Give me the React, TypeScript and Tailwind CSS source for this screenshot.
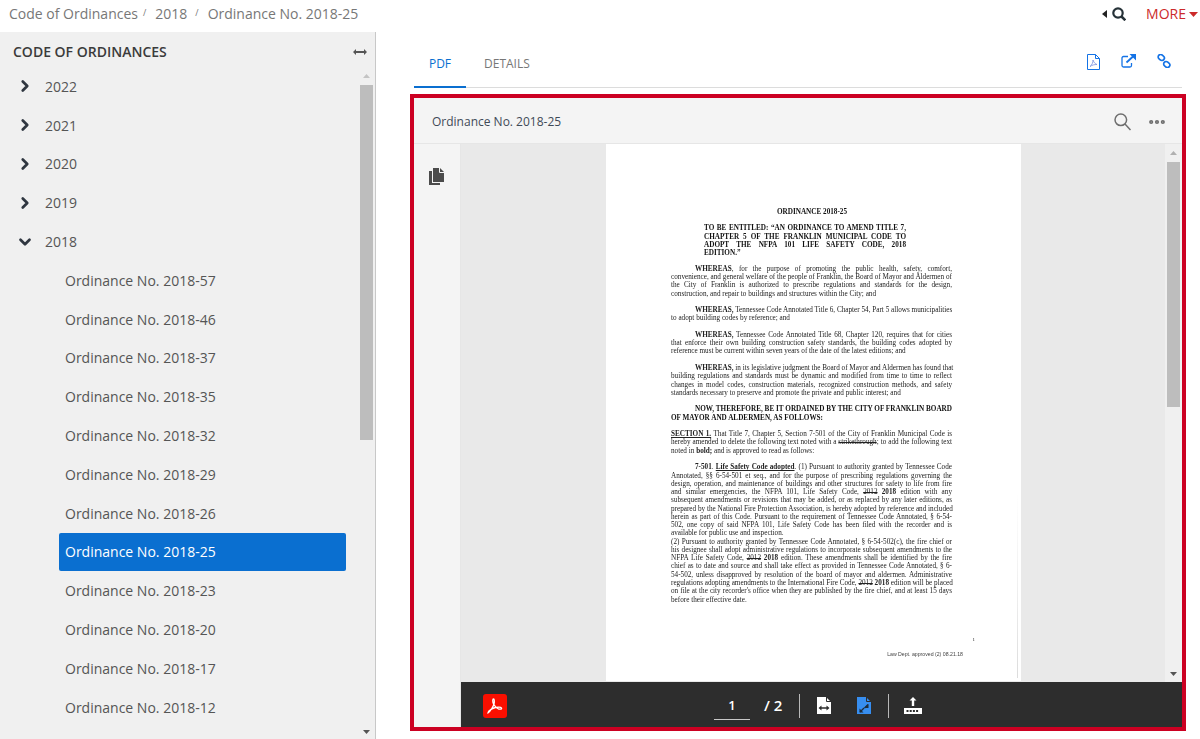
import { ChevronDown, ChevronRight, MoreHorizontal } from "lucide-react";
import type { ReactNode } from "react";

const years = ["2022", "2021", "2020", "2019"];
const ordinances = ["57", "46", "37", "35", "32", "29", "26", "25", "23", "20", "17", "12"];

function Row({ children, last }: { children: ReactNode; last?: boolean }) {
  return <div className={last ? "whitespace-nowrap" : "whitespace-nowrap text-justify [text-align-last:justify]"}>{children}</div>;
}

function Para({ lines, indent, className }: { lines: ReactNode[]; indent?: boolean; className?: string }) {
  return (
    <div className={className}>
      {lines.map((line, i) => (
        <div key={i} className={i === 0 && indent ? "pl-[24px]" : ""}>
          <Row last={i === lines.length - 1}>{line}</Row>
        </div>
      ))}
    </div>
  );
}

function PdfPage() {
  return (
    <div className="w-[415px] h-[537px] shrink-0 bg-white overflow-hidden flex">
      <div className="w-[411px] shrink-0 pt-[64px] pl-[65px] pr-[65px] font-['Liberation_Serif',serif] text-[7.2px] leading-[8.27px] text-[#222] blur-[0.25px]">
        <div className="text-center font-bold text-[#111] pl-[1px]">ORDINANCE 2018-25</div>
        <Para
          className="mt-[8px] ml-[33px] mr-[46px] font-bold text-[#111]"
          lines={[
            "TO BE ENTITLED: “AN ORDINANCE TO AMEND TITLE 7,",
            "CHAPTER 5 OF THE FRANKLIN MUNICIPAL CODE TO",
            "ADOPT THE NFPA 101 LIFE SAFETY CODE, 2018",
            "EDITION.”",
          ]}
        />
        <Para
          indent
          className="mt-[7.4px]"
          lines={[
            <><b>WHEREAS</b>, for the purpose of promoting the public health, safety, comfort,</>,
            "convenience, and general welfare of the people of Franklin, the Board of Mayor and Aldermen of",
            "the City of Franklin is authorized to prescribe regulations and standards for the design,",
            "construction, and repair to buildings and structures within the City; and",
          ]}
        />
        <Para
          indent
          className="mt-[8.3px]"
          lines={[
            <><b>WHEREAS,</b> Tennessee Code Annotated Title 6, Chapter 54, Part 5 allows municipalities</>,
            "to adopt building codes by reference; and",
          ]}
        />
        <Para
          indent
          className="mt-[8.3px]"
          lines={[
            <><b>WHEREAS,</b> Tennessee Code Annotated Title 68, Chapter 120, requires that for cities</>,
            "that enforce their own building construction safety standards, the building codes adopted by",
            "reference must be current within seven years of the date of the latest editions; and",
          ]}
        />
        <Para
          indent
          className="mt-[8.3px]"
          lines={[
            <><b>WHEREAS,</b> in its legislative judgment the Board of Mayor and Aldermen has found that</>,
            "building regulations and standards must be dynamic and modified from time to time to reflect",
            "changes in model codes, construction materials, recognized construction methods, and safety",
            "standards necessary to preserve and promote the private and public interest; and",
          ]}
        />
        <Para
          indent
          className="mt-[8.3px] font-bold text-[#111]"
          lines={["NOW, THEREFORE, BE IT ORDAINED BY THE CITY OF FRANKLIN BOARD", "OF MAYOR AND ALDERMEN, AS FOLLOWS:"]}
        />
        <Para
          className="mt-[8.3px]"
          lines={[
            <><b className="underline">SECTION 1.</b> That Title 7, Chapter 5, Section 7-501 of the City of Franklin Municipal Code is</>,
            <>hereby amended to delete the following text noted with a <s>strikethrough</s>; to add the following text</>,
            <>noted in <b>bold;</b> and is approved to read as follows:</>,
          ]}
        />
        <Para
          indent
          className="mt-[8.3px]"
          lines={[
            <><b>7-501</b>. <b className="underline">Life Safety Code adopted</b>. (1) Pursuant to authority granted by Tennessee Code</>,
            "Annotated, §§ 6-54-501 et seq., and for the purpose of prescribing regulations governing the",
            "design, operation, and maintenance of buildings and other structures for safety to life from fire",
            <>and similar emergencies, the NFPA 101, Life Safety Code, <s>2012</s> <b>2018</b> edition with any</>,
            "subsequent amendments or revisions that may be added, or as replaced by any later editions, as",
            "prepared by the National Fire Protection Association, is hereby adopted by reference and included",
            "herein as part of this Code. Pursuant to the requirement of Tennessee Code Annotated, § 6-54-",
            "502, one copy of said NFPA 101, Life Safety Code has been filed with the recorder and is",
            "available for public use and inspection.",
          ]}
        />
        <Para
          lines={[
            "(2) Pursuant to authority granted by Tennessee Code Annotated, § 6-54-502(c), the fire chief or",
            "his designee shall adopt administrative regulations to incorporate subsequent amendments to the",
            <>NFPA Life Safety Code, <s>2012</s> <b>2018</b> edition. These amendments shall be identified by the fire</>,
            "chief as to date and source and shall take effect as provided in Tennessee Code Annotated, § 6-",
            "54-502, unless disapproved by resolution of the board of mayor and aldermen. Administrative",
            <>regulations adopting amendments to the International Fire Code, <s>2012</s> <b>2018</b> edition will be placed</>,
            "on file at the city recorder's office when they are published by the fire chief, and at least 15 days",
            "before their effective date.",
          ]}
        />
        <div className="mt-[33px] -mr-[23px] text-right text-[5px] leading-[6px]">1</div>
        <div className="mt-[8px] -mr-[11px] text-right font-['Liberation_Sans',sans-serif] text-[5.2px] leading-[7px] text-[#444]">
          Law Dept. approved (2) 08.21.18
        </div>
      </div>
      <div className="w-px h-[187px] self-end mb-[3px] bg-linear-to-b from-white via-[#f0f0f0] to-[#dcdcdc]" />
    </div>
  );
}

export default function App() {
  return (
    <div className="w-[1200px] h-[739px] overflow-hidden flex flex-col bg-white font-['Open_Sans',sans-serif]">
      {/* Top bar */}
      <div className="h-8 shrink-0 flex items-start justify-between pl-[9px] pr-[2px] text-sm">
        <div className="flex items-center h-[27px] text-[#777] text-[14px]">
          <span>Code of Ordinances</span>
          <span className="ml-[5px] mr-[9px] text-[9px]">/</span>
          <span>2018</span>
          <span className="ml-[8px] mr-[9px] text-[9px]">/</span>
          <span>Ordinance No. 2018-25</span>
        </div>
        <div className="flex items-center h-[28px]">
          <svg width="5" height="8" viewBox="0 0 5 8" className="mr-[5px]">
            <path d="M5 0v8L0 4z" fill="#222" />
          </svg>
          <svg width="14" height="14" viewBox="0 0 14 14" fill="none" stroke="#263238" strokeWidth="2.200">
            <circle cx="6" cy="6" r="4.700" />
            <path d="M9.500 9.500l3.800 3.800" strokeWidth="2.500" />
          </svg>
          <span className="ml-[20px] text-[#cc2a2a] text-[14px]">MORE</span>
          <svg width="9" height="5" viewBox="0 0 9 5" className="ml-[3px]">
            <path d="M0 0h9L4.500 5z" fill="#cc2a2a" />
          </svg>
        </div>
      </div>

      <div className="flex flex-1 min-h-0">
        {/* Sidebar */}
        <aside className="w-[376px] shrink-0 bg-[#f0f0f0] border-r border-[#c8c8c8] flex flex-col">
          <div className="h-[35px] shrink-0 flex items-center justify-between pl-[13px] pr-[8px] pt-[4px]">
            <span className="text-[14px] font-semibold text-[#3b3b3b]">CODE OF ORDINANCES</span>
            <svg width="14" height="6" viewBox="0 0 14 6">
              <path d="M0 3l3-3v2h8V0l3 3-3 3V4H3v2z" fill="#555" />
            </svg>
          </div>
          <div className="flex flex-1 min-h-0">
            <div className="flex-1 min-w-0 overflow-hidden">
              {years.map((y) => (
                <div key={y} className="h-[38.8px] flex items-center text-[14px] text-[#555]">
                  <ChevronRight size={18} strokeWidth={3.6} className="ml-[16px] text-[#2f3640]" />
                  <span className="ml-[11px]">{y}</span>
                </div>
              ))}
              <div className="h-[38.8px] flex items-center text-[14px] text-[#555]">
                <ChevronDown size={18} strokeWidth={3.6} className="ml-[16px] text-[#2f3640]" />
                <span className="ml-[11px]">2018</span>
              </div>
              {ordinances.map((n) => (
                <div key={n} className="h-[38.8px] flex items-center pl-[59px] pr-[14px] text-[14px]">
                  <div className={n === "25" ? "w-full h-[38px] flex items-center pl-[6px] rounded-[2px] bg-[#0a6fd0] text-white" : "w-full pl-[6px] text-[#555]"}>
                    Ordinance No. 2018-{n}
                  </div>
                </div>
              ))}
            </div>
            <div className="w-[13px] shrink-0 mr-[2px] flex flex-col items-center">
              <div className="h-[18px] flex items-center justify-center">
                <svg width="7" height="4" viewBox="0 0 7 4"><path d="M0 4h7L3.500 0z" fill="#c4c4c4" /></svg>
              </div>
              <div className="w-[13px] h-[355px] bg-[#bdbdbd]" />
              <div className="mt-auto h-[14px] flex items-center justify-center">
                <svg width="7" height="4" viewBox="0 0 7 4"><path d="M0 0h7L3.500 4z" fill="#555" /></svg>
              </div>
            </div>
          </div>
        </aside>

        {/* Main */}
        <main className="flex-1 min-w-0 pl-[34px] pr-[14px]">
          <div className="h-[56px] ml-[4px] mr-[4px] border-b border-[#dcdcdc] flex items-start justify-between">
            <div className="flex text-[12px] mt-[17px]">
              <div className="w-[52px] h-[39px] pt-[6px] text-center text-[#0a6fd0] border-b-2 border-[#0a6fd0]">PDF</div>
              <div className="ml-[18px] pt-[6px] text-[#777]">DETAILS</div>
            </div>
            <div className="flex items-start mt-[22px] mr-[11px]">
              <svg width="13" height="16" viewBox="0 0 13 16" fill="none" stroke="#1473e6" strokeWidth="1">
                <path d="M.500.500h8l4 4v11h-12z" />
                <path d="M8.500.500v4h4" />
                <path d="M3 12.500c2-1.500 3-4 3-6.500 1 3 2.500 4 4 4.500-2.500 0-5 .5-7 2z" stroke="#7a8fe0" strokeWidth=".8" />
              </svg>
              <svg width="15" height="14" viewBox="0 0 15 14" fill="none" className="ml-[21px]">
                <path d="M7 2.500H2.500a1.500 1.500 0 0 0-1.500 1.500v7.500A1.500 1.500 0 0 0 2.500 13H9a1.500 1.500 0 0 0 1.500-1.500V9" stroke="#1473e6" strokeWidth="1.300" />
                <path d="M5.500 8.500L12 2.500" stroke="#1473e6" strokeWidth="1.800" />
                <path d="M8.500 0H15v6.500z" fill="#1473e6" />
              </svg>
              <svg width="14" height="14" viewBox="0 0 14 14" fill="none" stroke="#1473e6" strokeWidth="1.700" className="ml-[21px]">
                <rect x="1" y="1" width="6.500" height="5" rx="2.500" transform="rotate(40 4.250 3.500)" />
                <rect x="6.500" y="8" width="6.500" height="5" rx="2.500" transform="rotate(40 9.750 10.500)" />
              </svg>
            </div>
          </div>

          {/* Viewer */}
          <div className="mt-[6px] h-[637px] border-4 border-[#cc0022] flex flex-col w-[776px]">
            <div className="h-[46px] shrink-0 bg-[#f4f4f4] border-b border-[#e6e6e6] flex items-center justify-between pl-[18px] pr-[15px] pt-[2px]">
              <span className="text-[12px] text-[#3f4a57]">Ordinance No. 2018-25</span>
              <div className="flex items-center gap-[16px]">
                <svg width="17" height="18" viewBox="0 0 17 18" fill="none" stroke="#6e6e6e" strokeWidth="1.500">
                  <circle cx="6.800" cy="6.800" r="5.800" />
                  <path d="M11 11l5.500 6" />
                </svg>
                <MoreHorizontal size={20} strokeWidth={3} className="text-[#6e6e6e]" />
              </div>
            </div>
            <div className="flex flex-1 min-h-0">
              <div className="w-[47px] shrink-0 bg-[#f4f4f4] border-r border-[#e6e6e6] flex justify-center pt-[24px] pr-[2px]">
                <svg width="15" height="17" viewBox="0 0 15 17">
                  <path d="M4 0h7l4 4v10H4z" fill="#4b4b4b" />
                  <path d="M10.500 0v4.500H15" fill="none" stroke="#f4f4f4" strokeWidth="1" />
                  <path d="M0 3h3v12h8v2H0z" fill="#4b4b4b" />
                </svg>
              </div>
              <div className="flex-1 min-w-0 flex flex-col">
                <div className="flex flex-1 min-h-0">
                  <div className="flex-1 min-w-0 bg-[#e9e9e9] flex justify-center pl-[1px] overflow-hidden">
                    <PdfPage />
                  </div>
                  <div className="w-[17px] shrink-0 bg-[#f0f0f0] flex flex-col items-center">
                    <div className="h-[18px] flex items-center justify-center">
                      <svg width="7" height="4" viewBox="0 0 7 4"><path d="M0 4h7L3.500 0z" fill="#b0b0b0" /></svg>
                    </div>
                    <div className="w-[13px] h-[245px] bg-[#bdbdbd]" />
                    <div className="mt-auto h-[16px] flex items-center justify-center">
                      <svg width="7" height="4" viewBox="0 0 7 4"><path d="M0 0h7L3.500 4z" fill="#555" /></svg>
                    </div>
                  </div>
                </div>
                <div className="h-[45px] shrink-0 bg-[#2d2d2d] flex items-center pl-[22px] pt-[2px] text-white text-[14px]">
                  <svg width="24" height="24" viewBox="0 0 24 24">
                    <rect width="24" height="24" rx="3" fill="#fa0f00" />
                    <path
                      d="M5 19c2-1 5-6 6-9 .5-2 .5-5-.5-5s-1 3 0 5c1.500 2.500 3.500 4.500 5 5 2 .5 3.500 0 3-1s-3-1-6-.5c-2.500.5-5 2-6.500 3.500-.5.7-1 1.700-1 2z"
                      fill="none"
                      stroke="#fff"
                      strokeWidth="1.300"
                    />
                  </svg>
                  <div className="ml-[207px] w-[36px] h-[27px] mt-[1px] text-center font-semibold text-[13px] leading-[25px] border-b border-[#c8c8c8]">1</div>
                  <div className="ml-[14px] font-semibold text-[15px] whitespace-pre">/ 2</div>
                  <div className="ml-[17px] w-px h-6 bg-[#b8b8b8]" />
                  <svg width="14" height="17" viewBox="0 0 14 17" className="ml-[17px]">
                    <path d="M0 0h9l5 5v12H0z" fill="#fff" />
                    <path d="M9.500 0v4.500H14" fill="none" stroke="#2d2d2d" />
                    <path d="M1.500 11l3-2.500v1.700h5V8.500l3 2.500-3 2.500v-1.700h-5v1.700z" fill="#2d2d2d" />
                  </svg>
                  <svg width="14" height="17" viewBox="0 0 14 17" className="ml-[26px]">
                    <path d="M0 0h9l5 5v12H0z" fill="#378ef0" />
                    <path d="M9.500 0v4.500H14" fill="none" stroke="#2d2d2d" />
                    <path d="M3 15l4-4M11 7.500l-3.500 3.500" stroke="#1d2b3a" strokeWidth="1.300" />
                    <path d="M2.500 11.500v4h4zM11.500 7v4h-4z" fill="#1d2b3a" />
                  </svg>
                  <div className="ml-[17px] w-px h-6 bg-[#b8b8b8]" />
                  <svg width="18" height="18" viewBox="0 0 18 18" className="ml-[15px]">
                    <path d="M9 0l3.500 3.500h-2.300V9H7.800V3.500H5.500z" fill="#fff" />
                    <path d="M0 11h18v6H0z" fill="#fff" />
                    <path d="M2.500 13h2v2h-2zM5.700 13h2v2h-2zM8.900 13h2v2h-2zM12.100 13h2v2h-2z" fill="#2d2d2d" />
                  </svg>
                </div>
              </div>
            </div>
          </div>
        </main>
      </div>
    </div>
  );
}
